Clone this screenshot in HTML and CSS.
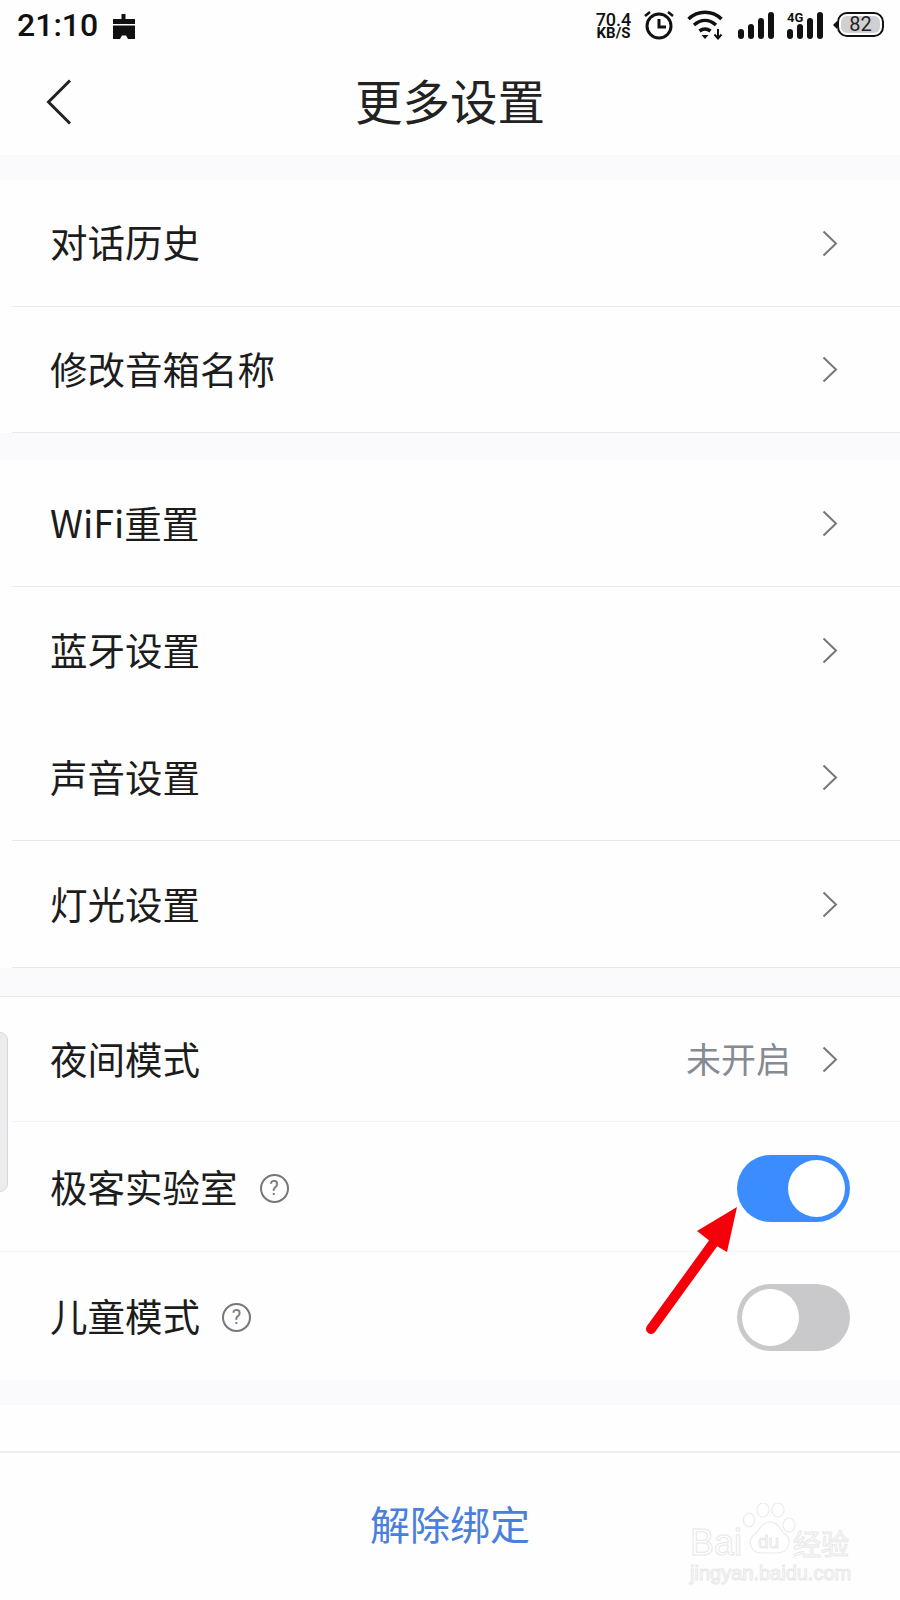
FILE: index.html
```html
<!DOCTYPE html>
<html lang="zh-CN">
<head>
    <meta charset="UTF-8">
    <title>更多设置</title>
    <link rel="stylesheet" href="styles.css">
</head>
<body>
<div class="page">
    <div class="status">
        <div class="status-left">
            <span class="clock">21:10</span>
            <svg class="notify" width="24" height="26" viewBox="0 0 24 26"><path d="M9.500 0h4v5h9.500v5H1V5h8.500zM1 11.500h22v13.500h-7l-2-3.500h-4l-2 3.500H1z" fill="#111"/></svg>
        </div>
        <div class="status-right">
            <div class="speed"><span class="speed-num">70.4</span><span class="speed-unit">KB/S</span></div>
            <svg class="alarm" width="32" height="32" viewBox="0 0 32 32" fill="none" stroke="#111">
                <circle cx="16" cy="17" r="12" stroke-width="3"/>
                <path d="M16 10v8h7" stroke-width="3"/>
                <path d="M2 7l5-4M30 7l-5-4" stroke-width="2.500"/>
            </svg>
            <svg class="wifi" width="38" height="30" viewBox="0 0 38 30" fill="none" stroke="#111" stroke-width="3.500">
                <path d="M1.500 9C11 0 25 0 34.500 9"/>
                <path d="M7 15c7-6 15-6 22 0"/>
                <path d="M12.500 21c4-3 7-3 11 0"/>
                <path d="M14.500 25h7l-3.500 4z" fill="#111" stroke="none"/>
                <path d="M31 19v8M27.500 24.500l3.500 4 3.500-4" stroke-width="2"/>
            </svg>
            <svg class="signal" width="36" height="27" viewBox="0 0 36 27" fill="#111">
                <rect x="0" y="17" width="6" height="10" rx="3"/>
                <rect x="10" y="12" width="6" height="15" rx="3"/>
                <rect x="20" y="6" width="6" height="21" rx="3"/>
                <rect x="30" y="0" width="6" height="27" rx="3"/>
            </svg>
            <div class="signal-4g">
                <span class="tag-4g">4G</span>
                <svg width="36" height="27" viewBox="0 0 36 27" fill="#111">
                    <rect x="0" y="17" width="6" height="10" rx="3"/>
                    <rect x="10" y="12" width="6" height="15" rx="3"/>
                    <rect x="20" y="6" width="6" height="21" rx="3"/>
                    <rect x="30" y="0" width="6" height="27" rx="3"/>
                </svg>
            </div>
            <div class="battery"><div class="battery-fill">82</div></div>
        </div>
    </div>

    <div class="topbar">
        <svg class="back" width="26" height="46" viewBox="0 0 26 46" fill="none"><path d="M24 1.500L2.500 23 24 44.500" stroke="#222" stroke-width="3"/></svg>
        <h1>更多设置</h1>
    </div>

    <div class="gap"></div>
    <div class="group group-a">
        <div class="row inset"><span class="label">对话历史</span><svg class="chev" width="16" height="27" viewBox="0 0 16 27" fill="none"><path d="M1.500 1.500L14 13.500 1.500 25.500" stroke="#777" stroke-width="2"/></svg></div>
        <div class="row inset"><span class="label">修改音箱名称</span><svg class="chev" width="16" height="27" viewBox="0 0 16 27" fill="none"><path d="M1.500 1.500L14 13.500 1.500 25.500" stroke="#777" stroke-width="2"/></svg></div>
    </div>
    <div class="gap gap-b"></div>
    <div class="group group-b">
        <div class="row inset"><span class="label">WiFi重置</span><svg class="chev" width="16" height="27" viewBox="0 0 16 27" fill="none"><path d="M1.500 1.500L14 13.500 1.500 25.500" stroke="#777" stroke-width="2"/></svg></div>
        <div class="row"><span class="label">蓝牙设置</span><svg class="chev" width="16" height="27" viewBox="0 0 16 27" fill="none"><path d="M1.500 1.500L14 13.500 1.500 25.500" stroke="#777" stroke-width="2"/></svg></div>
        <div class="row inset"><span class="label">声音设置</span><svg class="chev" width="16" height="27" viewBox="0 0 16 27" fill="none"><path d="M1.500 1.500L14 13.500 1.500 25.500" stroke="#777" stroke-width="2"/></svg></div>
        <div class="row inset"><span class="label">灯光设置</span><svg class="chev" width="16" height="27" viewBox="0 0 16 27" fill="none"><path d="M1.500 1.500L14 13.500 1.500 25.500" stroke="#777" stroke-width="2"/></svg></div>
    </div>
    <div class="gap gap-c"></div>
    <div class="group group-c">
        <div class="row faint"><span class="label">夜间模式</span><span class="value">未开启</span><svg class="chev" width="16" height="27" viewBox="0 0 16 27" fill="none"><path d="M1.500 1.500L14 13.500 1.500 25.500" stroke="#777" stroke-width="2"/></svg></div>
        <div class="row tall">
            <span class="label">极客实验室</span><span class="help">?</span>
            <div class="toggle on"><div class="knob"></div></div>
        </div>
        <div class="row last">
            <span class="label">儿童模式</span><span class="help">?</span>
            <div class="toggle"><div class="knob"></div></div>
        </div>
    </div>
    <div class="gap"></div>

    <div class="spacer"></div>
    <div class="unbind">解除绑定</div>

    <div class="side-tab"></div>
    <svg class="arrow" width="100" height="135" viewBox="0 0 100 135">
        <path d="M92 3L52 27 70 41 82 48z" fill="#f5000a"/>
        <path d="M72 34L6 125" stroke="#f5000a" stroke-width="10" stroke-linecap="round" fill="none"/>
    </svg>
    <div class="watermark">
        <span class="wm-bai">Bai</span>
        <svg class="wm-paw" width="54" height="56" viewBox="0 0 54 56" fill="#fff" stroke="#ebebeb" stroke-width="1.200">
            <ellipse cx="6" cy="17" rx="5.500" ry="7"/>
            <ellipse cx="20" cy="7" rx="6" ry="7"/>
            <ellipse cx="35" cy="7" rx="6" ry="7"/>
            <ellipse cx="46" cy="22" rx="6" ry="7"/>
            <path d="M27 19c8 0 10 8 15 12 8 7 3 19-8 19H19C8 50 3 38 12 31c5-4 7-12 15-12z"/>
        </svg>
        <span class="wm-du">du</span>
        <span class="wm-cn">经验</span>
        <span class="wm-url">jingyan.baidu.com</span>
    </div>
</div>
</body>
</html>
```

FILE: styles.css
```css
* { box-sizing: border-box; }
body { margin: 0; background: #fff; font-family: "Noto Sans CJK SC", "Noto Sans", sans-serif; color: #1c1c1c; }
.page { position: relative; width: 900px; height: 1600px; overflow: hidden; display: flex; flex-direction: column; background: #fefefe; }

/* status bar */
.status { height: 52px; display: flex; justify-content: space-between; align-items: flex-start; padding: 9px 16px 0 17px; flex: none; }
.status-left { display: flex; align-items: center; gap: 14px; }
.clock { font-family: Roboto, sans-serif; font-weight: 500; font-size: 32px; line-height: 32px; color: #111; }
.notify { margin-top: 3px; }
.status-right { display: flex; align-items: flex-start; }
.speed { display: flex; flex-direction: column; align-items: center; width: 37px; font-family: Roboto, sans-serif; font-weight: 700; color: #111; margin-top: 3px; }
.speed-num { font-size: 18px; line-height: 15px; font-weight: 500; }
.speed-unit { font-size: 15px; line-height: 13px; }
.alarm { margin-left: 11px; margin-top: 0; }
.wifi { margin-left: 12px; margin-top: 1px; }
.signal { margin-left: 13px; margin-top: 3px; }
.signal-4g { position: relative; margin-left: 13px; margin-top: 3px; }
.tag-4g { position: absolute; left: 0; top: -1px; font-family: Roboto, sans-serif; font-weight: 700; font-size: 13px; line-height: 13px; color: #111; }
.battery { position: relative; width: 47px; height: 25px; margin-left: 14px; margin-top: 3px; border: 2.5px solid #111; border-radius: 10px; padding: 2px; }
.battery:before { content: ""; position: absolute; left: -6px; top: 7px; border: 4px solid transparent; border-right: 4px solid #111; border-left: 0; }
.battery-fill { height: 100%; width: 100%; background: #d0d0d2; border-radius: 6px; font-family: Roboto, sans-serif; font-size: 20px; line-height: 16px; text-align: center; color: #222; }

/* top bar */
.topbar { position: relative; height: 103px; flex: none; display: flex; align-items: center; justify-content: center; }
.topbar h1 { margin: 0; font-size: 47.5px; line-height: 60px; font-weight: 400; color: #222; margin-top: -8px; }
.back { position: absolute; left: 46px; top: 27px; }

/* list */
.gap { height: 25px; background: #faf9fb; flex: none; }
.gap-b { height: 27px; }
.gap-c { height: 28px; }
.group { display: flex; flex-direction: column; flex: none; background: #fefefe; }
.group-a { height: 253px; }
.group-b { height: 508px; }
.group-c { height: 384px; border-top: 1px solid #e9e9e9; }
.row { position: relative; flex: 1; display: flex; align-items: center; padding: 0 62px 0 50px; }
.row.inset:after { content: ""; position: absolute; left: 12px; right: 0; bottom: 0; height: 1px; background: #e9e9e9; }
.row.faint:after { content: ""; position: absolute; left: 12px; right: 0; bottom: 0; height: 1px; background: #f3f3f3; }
.row.tall { flex: 0 0 130px; padding-top: 3px; border-bottom: 1px solid #f3f3f3; }
.row.last { flex: 0 0 128px; padding-top: 2px; }
.label { font-size: 37.5px; line-height: 50px; color: #1c1c1c; margin-top: -4px; }
.value { margin-left: auto; margin-right: 31px; font-size: 35px; line-height: 50px; color: #858a93; margin-top: -4px; }
.chev { margin-left: auto; flex: none; }
.value + .chev { margin-left: 0; }
.help { width: 29px; height: 29px; margin-left: 22px; border: 2px solid #777; border-radius: 50%; font-family: Roboto, sans-serif; font-size: 20px; line-height: 25px; text-align: center; color: #777; }

/* toggles */
.toggle { margin-left: auto; margin-right: -12px; width: 113px; height: 67px; border-radius: 34px; background: #c9c8cb; padding: 5px; display: flex; }
.toggle.on { background: #3a8cff; justify-content: flex-end; }
.knob { width: 57px; height: 57px; border-radius: 50%; background: #fff; }

/* bottom */
.spacer { height: 46px; flex: none; }
.unbind { height: 150px; flex: none; border-top: 2px solid #efefef; text-align: center; font-size: 40px; line-height: 140px; color: #4a7fdc; }

/* things lying over the list */
.side-tab { position: absolute; left: -8px; top: 1032px; width: 16px; height: 160px; background: #ececee; border: 1px solid #d8d8da; border-radius: 8px; }
.arrow { position: absolute; left: 645px; top: 1204px; }
.watermark { position: absolute; left: 690px; top: 1500px; width: 170px; height: 90px; }
.watermark span { position: absolute; color: #fff; -webkit-text-stroke: 1px #e8e8e8; font-family: "Liberation Sans", sans-serif; white-space: nowrap; }
.watermark .wm-bai { left: 0; top: 26px; font-size: 36px; line-height: 34px; }
.wm-paw { position: absolute; left: 53px; top: 3px; }
.watermark .wm-du { left: 68px; top: 33px; font-size: 19px; line-height: 18px; }
.watermark .wm-cn { left: 103px; top: 27px; font-family: "Noto Sans CJK SC", sans-serif; font-size: 28px; line-height: 32px; }
.watermark .wm-url { left: 0; top: 61px; font-size: 20px; line-height: 24px; }
```
